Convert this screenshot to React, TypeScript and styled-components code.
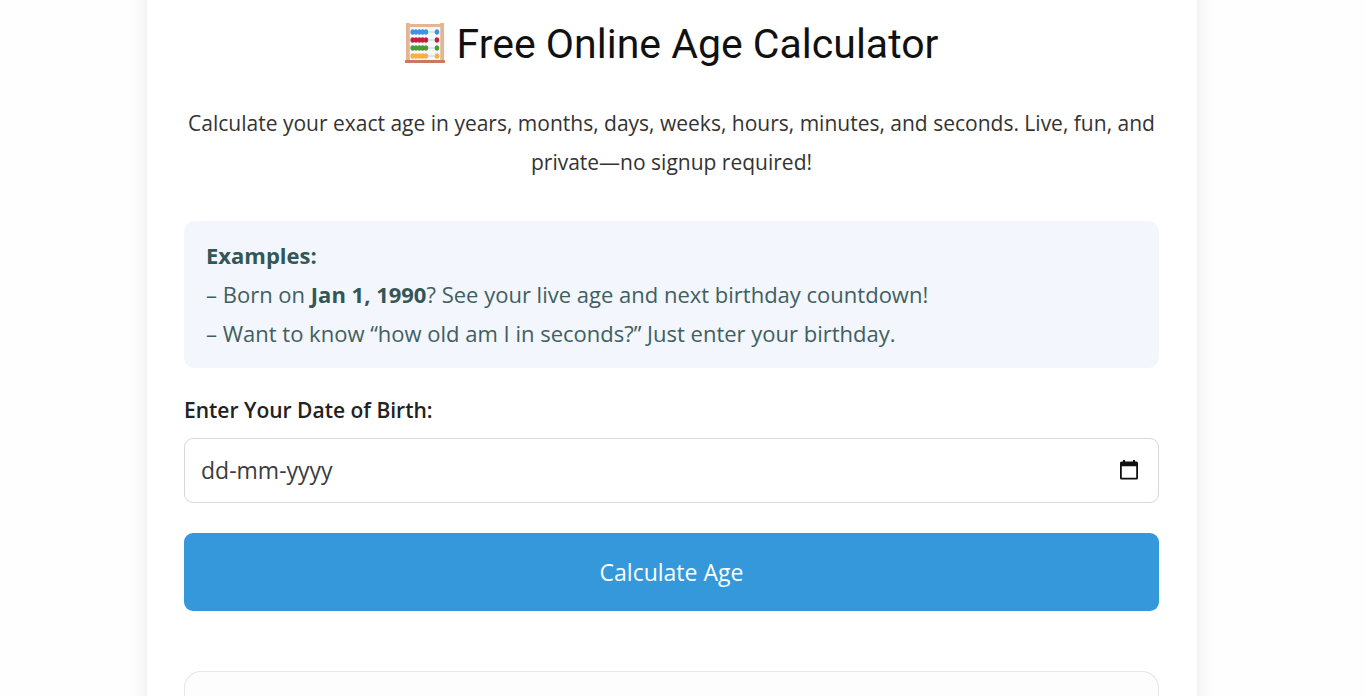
import React, { useState } from "react";
import styled, { createGlobalStyle } from "styled-components";

const GlobalStyle = createGlobalStyle`
  *, *::before, *::after { box-sizing: border-box; }
  body {
    margin: 0;
    background: #fefefe;
    color: #222;
    font-family: "Open Sans", "Noto Sans", sans-serif;
    font-size: 21px;
    line-height: 39px;
  }
`;

const Page = styled.div`
  display: flex;
  justify-content: center;
  min-height: 100vh;
  padding: 0 21px 0 0;
  overflow: clip;
`;

const Card = styled.main`
  display: flex;
  flex-direction: column;
  width: 100%;
  max-width: 1050px;
  margin: -32px 0;
  padding: 48px 38px 0 37px;
  background: #fff;
  box-shadow: 0 0 22px rgba(0, 0, 0, 0.08);
`;

const Title = styled.h1`
  display: flex;
  align-items: center;
  justify-content: center;
  gap: 12px;
  margin: 0 0 32px;
  color: #111;
  font-family: Roboto, sans-serif;
  font-size: 41px;
  font-weight: 400;
  line-height: 56px;
`;

const Intro = styled.p`
  margin: 0 0 39px;
  color: #333;
  text-align: center;
`;

const Examples = styled.section`
  padding: 15px 22px;
  border-radius: 11px;
  background: #f3f6fd;
  color: #3f6060;
  font-size: 22px;

  p { margin: 0; }
  strong { color: #345656; }
`;

const Form = styled.form`
  display: flex;
  flex-direction: column;
  margin-top: 23px;
`;

const Label = styled.label`
  margin-bottom: 8px;
  font-weight: 600;
`;

const DateField = styled.div`
  display: flex;
  align-items: center;
  height: 65px;
  padding: 0 19px 0 16px;
  border: 1px solid #d8d8d8;
  border-radius: 9px;
  background: #fff;
`;

const DateInput = styled.input`
  flex: 1;
  min-width: 0;
  padding: 0;
  border: 0;
  outline: 0;
  background: transparent;
  color: #333;
  font: inherit;
  font-size: 23px;

  &::placeholder { color: #3c3c3c; opacity: 1; }
`;

const PickerButton = styled.button`
  display: flex;
  padding: 0;
  border: 0;
  background: transparent;
  cursor: pointer;
`;

const SubmitButton = styled.button`
  height: 78px;
  margin-top: 30px;
  border: 0;
  border-radius: 9px;
  background: #3498db;
  color: #fff;
  font: inherit;
  font-size: 23px;
  cursor: pointer;
`;

const Result = styled.section`
  flex: 1;
  min-height: 25px;
  margin-top: 60px;
  border: 1px solid #e6e6e6;
  border-bottom: 0;
  border-radius: 17px 17px 0 0;
  background: #fdfdfd;
`;

const beadRows = [
  { y: 9, color: "#3f92dc" },
  { y: 17, color: "#c61f3b" },
  { y: 25, color: "#4d9b36" },
  { y: 33, color: "#ffae3d" },
];

function Abacus() {
  return (
    <svg width="40" height="42" viewBox="0 0 42 42" preserveAspectRatio="none" aria-hidden="true">
      <rect x="3" y="3" width="36" height="35" fill="#f4f8fb" />
      {beadRows.map(({ y, color }) => (
        <g key={y} fill={color}>
          <rect x="5" y={y - 0.5} width="32" height="1" fill="#b9d3e3" />
          {[8, 11.5, 15, 18.5, 22].map((x) => (
            <ellipse key={x} cx={x} cy={y} rx="2.3" ry="2.8" />
          ))}
          <ellipse cx="33.5" cy={y} rx="2.3" ry="2.8" />
        </g>
      ))}
      <path d="M1 0h4v1h32V0h4v37h-4V4H5v33H1z" fill="#e3b592" />
      <rect x="0" y="37" width="42" height="3" rx="0.5" fill="#c97864" />
    </svg>
  );
}

function CalendarIcon() {
  return (
    <svg width="20" height="22" viewBox="0 0 20 22" aria-hidden="true">
      <path
        fill="#111"
        fillRule="evenodd"
        d="M4 0h2v1.500h8V0h2v1.500h1.500q1.500 0 1.500 1.500v15q0 1.500-1.500 1.500h-15Q1 19.500 1 18v-15Q1 1.500 2.500 1.500H4zM2.800 6.300v11.400h14.400V6.300z"
      />
    </svg>
  );
}

export default function App() {
  const [birthDate, setBirthDate] = useState("");

  return (
    <>
      <GlobalStyle />
      <Page>
        <Card>
          <Title>
            <Abacus />
            Free Online Age Calculator
          </Title>
          <Intro>
            Calculate your exact age in years, months, days, weeks, hours, minutes, and seconds.
            Live, fun, and private—no signup required!
          </Intro>
          <Examples>
            <p><strong>Examples:</strong></p>
            <p>– Born on <strong>Jan 1, 1990</strong>? See your live age and next birthday countdown!</p>
            <p>– Want to know “how old am I in seconds?” Just enter your birthday.</p>
          </Examples>
          <Form onSubmit={(event) => event.preventDefault()}>
            <Label htmlFor="birth-date">Enter Your Date of Birth:</Label>
            <DateField>
              <DateInput
                id="birth-date"
                type="text"
                placeholder="dd-mm-yyyy"
                value={birthDate}
                onChange={(event) => setBirthDate(event.target.value)}
              />
              <PickerButton type="button" aria-label="Open calendar">
                <CalendarIcon />
              </PickerButton>
            </DateField>
            <SubmitButton type="submit">Calculate Age</SubmitButton>
          </Form>
          <Result aria-label="Result" />
        </Card>
      </Page>
    </>
  );
}
